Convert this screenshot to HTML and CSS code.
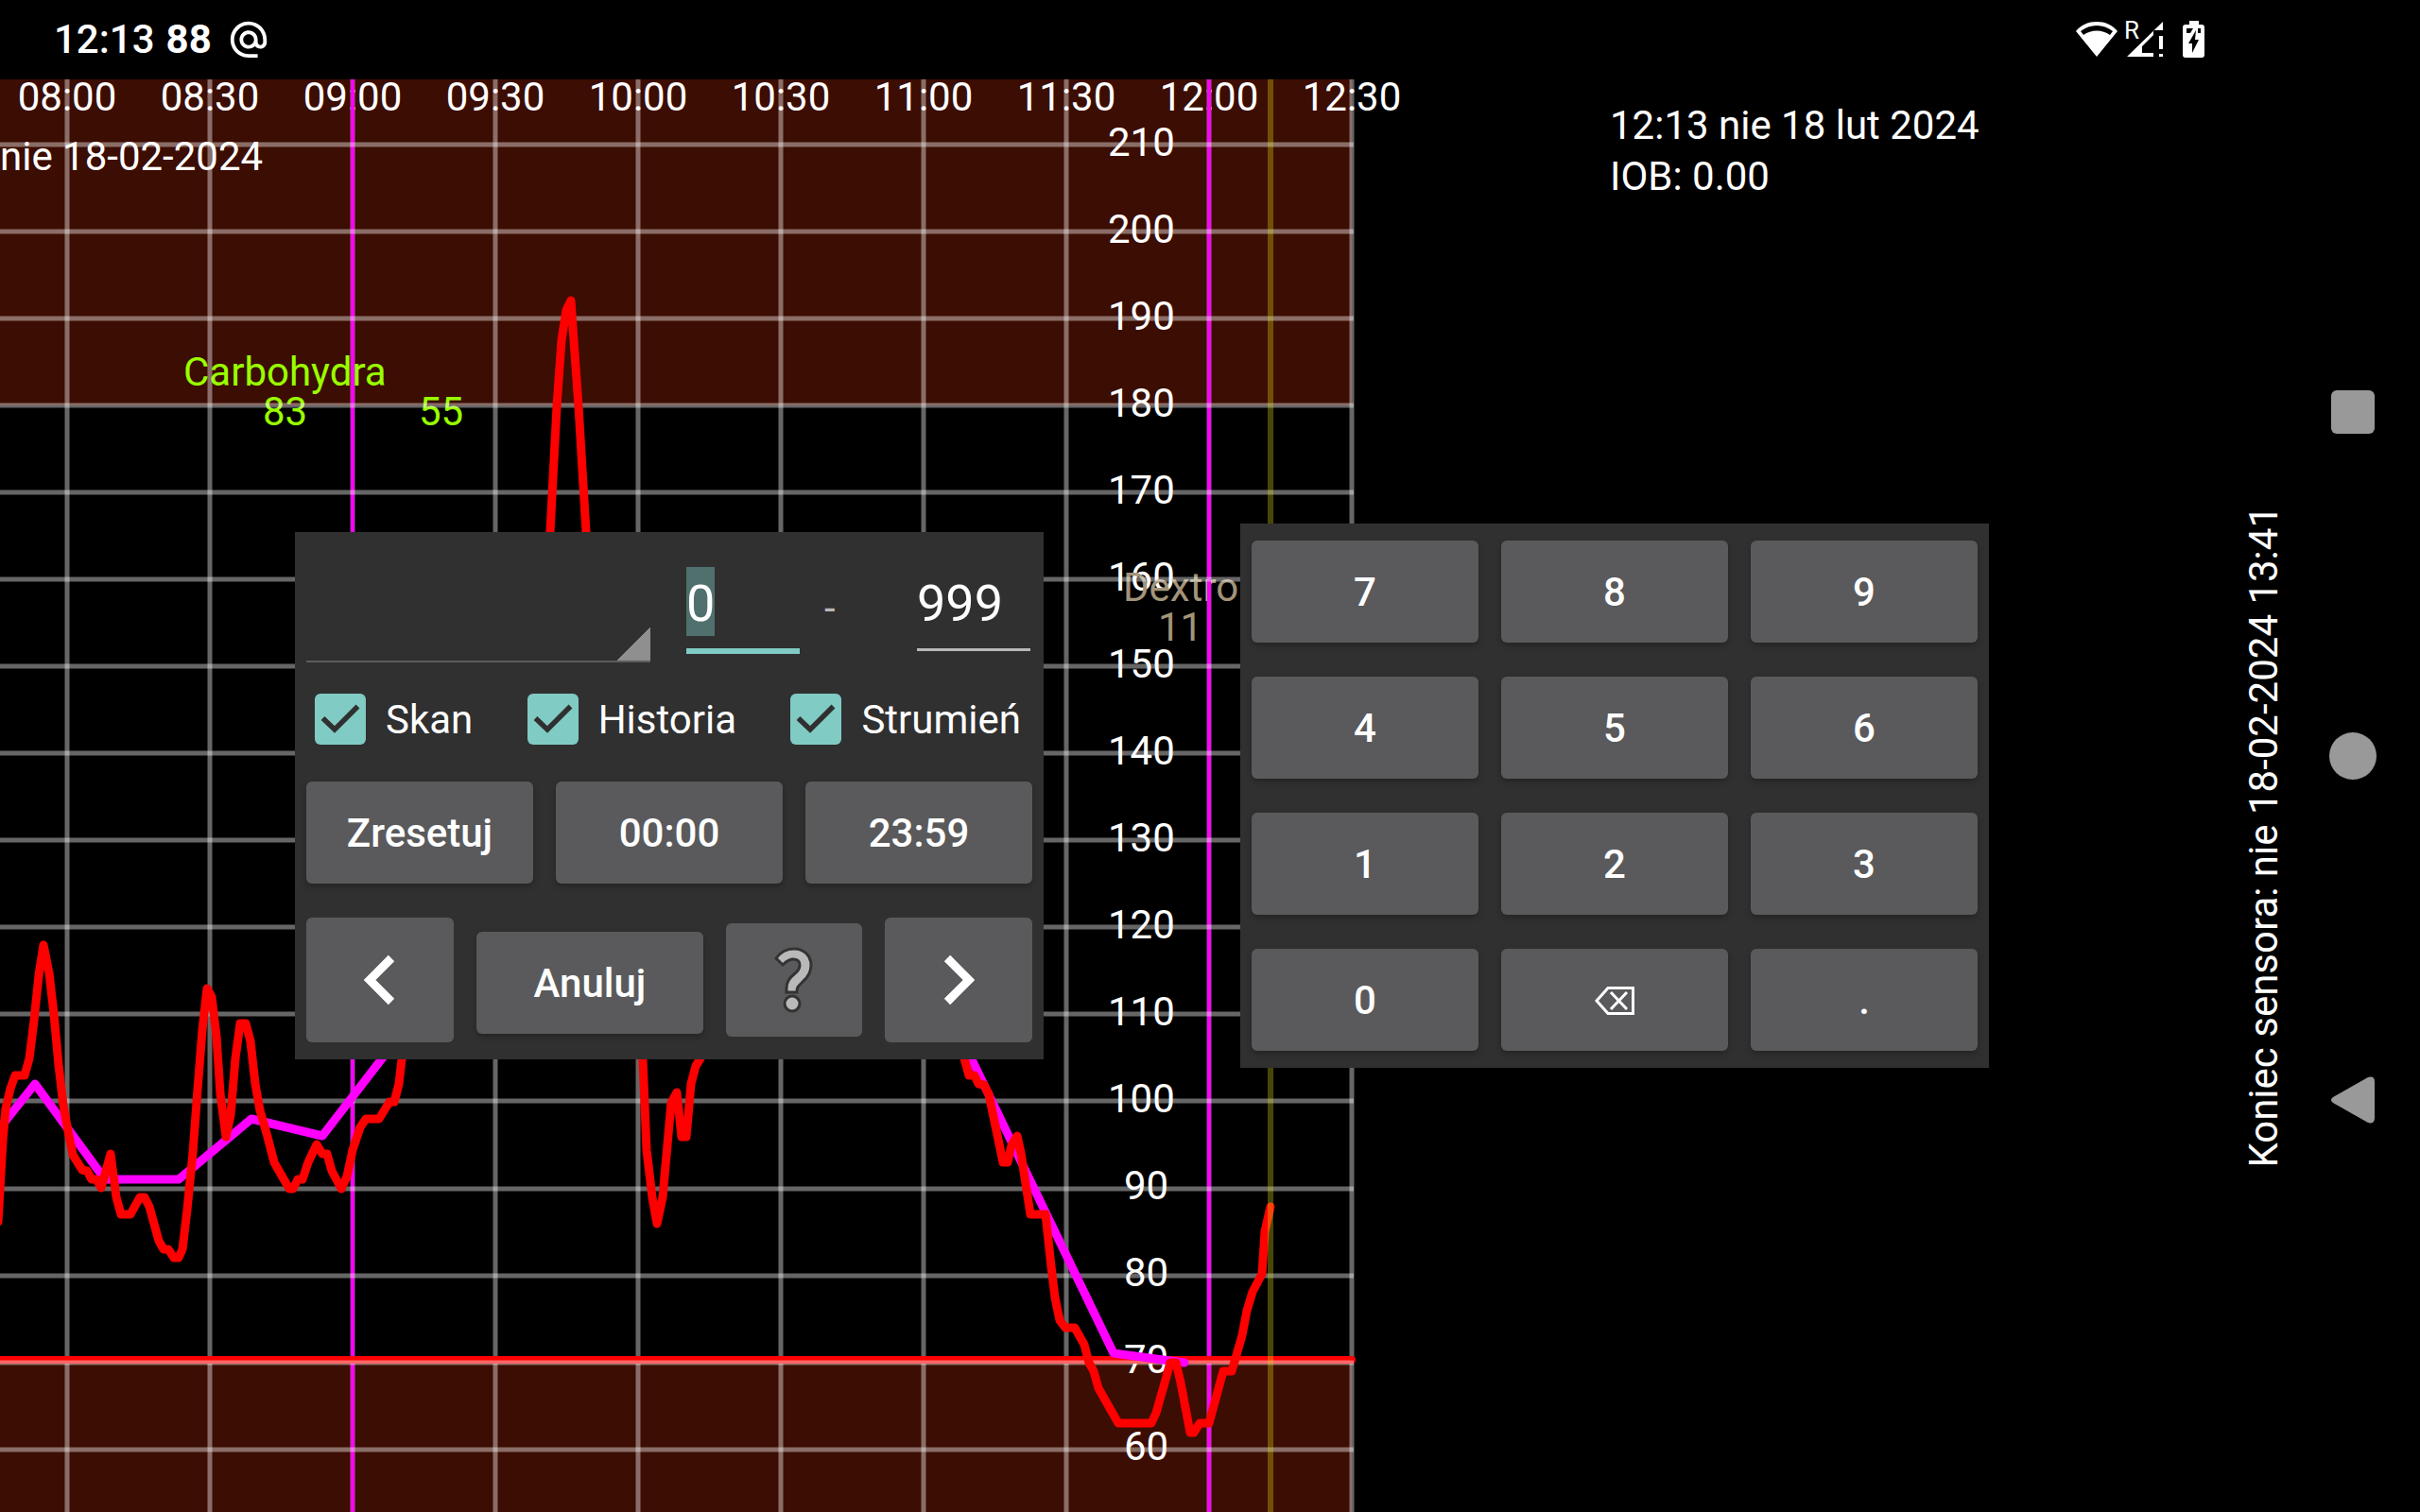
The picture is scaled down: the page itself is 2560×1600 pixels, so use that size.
FILE: index.html
```html
<!DOCTYPE html>
<html lang="pl">
<head>
<meta charset="utf-8">
<meta name="viewport" content="width=device-width, initial-scale=1">
<title>Juggluco</title>
<link rel="stylesheet" href="styles.css">
</head>
<body>
<header class="status">
  <div class="status-left">
    <span class="clock">12:13</span>
    <span class="reading">88</span>
    <svg class="at" viewBox="0 0 24 24" aria-hidden="true"><path fill="#fff" d="M12 1.95c-5.52 0-10 4.48-10 10s4.48 10 10 10h5v-2h-5c-4.34 0-8-3.66-8-8s3.66-8 8-8 8 3.66 8 8v1.43c0 .79-.71 1.57-1.500 1.570s-1.500-.78-1.500-1.570v-1.430c0-2.760-2.240-5-5-5s-5 2.240-5 5 2.240 5 5 5c1.380 0 2.640-.56 3.540-1.470.65.89 1.770 1.470 2.960 1.470 1.970 0 3.500-1.600 3.500-3.570v-1.430c0-5.520-4.480-10-10-10zm0 13c-1.660 0-3-1.340-3-3s1.340-3 3-3 3 1.340 3 3-1.340 3-3 3z"/></svg>
  </div>
  <svg class="tray" viewBox="0 0 144 48" aria-hidden="true">
    <path fill="#fff" fill-rule="evenodd" d="M26 43 4 16C10 9 17 6 26 6s16 3 22 10ZM9 16l3 4c8-6 20-6 28 0l3-4C33 8 19 8 9 16Z"/>
    <path fill="#fff" d="M96 6V15H86V20L74 32V39H86V43H58Z"/>
    <path fill="#fff" d="M92 21h4v14h-4zM92 40h4v3h-4z"/>
    <text x="55" y="24" class="roam">R</text>
    <path fill="#fff" d="M124 5h10v4h3q3 0 3 3v29q0 3-3 3h-17q-3 0-3-3V12q0-3 3-3h4Z"/>
    <path d="M121 13h7l-3 5h-4ZM133 13h3v5h-3ZM131 15l-8 14h4v10l7-14h-4Z"/>
  </svg>
</header>

<main class="stage">
  <svg class="chart" viewBox="0 84 2560 1516" preserveAspectRatio="xMinYMin slice" role="img" aria-label="Wykres glukozy">
    <rect class="zone" x="0" y="84" width="1430" height="345"/>
    <rect class="zone" x="0" y="1440" width="1430" height="160"/>

    <g class="label mid">
      <text x="71" y="117">08:00</text><text x="222" y="117">08:30</text>
      <text x="373" y="117">09:00</text><text x="524" y="117">09:30</text>
      <text x="675" y="117">10:00</text><text x="826" y="117">10:30</text>
      <text x="977" y="117">11:00</text><text x="1128" y="117">11:30</text>
      <text x="1279" y="117">12:00</text><text x="1430" y="117">12:30</text>
    </g>
    <g class="label">
      <text x="1172" y="165">210</text><text x="1172" y="257">200</text>
      <text x="1172" y="349">190</text><text x="1172" y="441">180</text>
      <text x="1172" y="533">170</text><text x="1172" y="625">160</text>
      <text x="1172" y="717">150</text><text x="1172" y="809">140</text>
      <text x="1172" y="901">130</text><text x="1172" y="993">120</text>
      <text x="1172" y="1085">110</text><text x="1172" y="1177">100</text>
      <text x="1189" y="1269">90</text><text x="1189" y="1361">80</text>
      <text x="1189" y="1453">70</text><text x="1189" y="1545">60</text>
      <text x="0" y="180">nie 18-02-2024</text>
    </g>
    <g class="label carbs">
      <text x="194" y="408">Carbohydra</text>
      <text x="278" y="450">83</text><text x="443" y="450">55</text>
    </g>
    <g class="label dextro">
      <text x="1188" y="636">Dextro</text><text x="1225" y="678">11</text>
    </g>

    <path class="grid" d="M71 84V1600M222 84V1600M373 84V1600M524 84V1600M675 84V1600M826 84V1600M977 84V1600M1128 84V1600M1279 84V1600M1430 84V1600"/>
    <path class="hours" d="M373 84V1600M1279 84V1600"/>
    <path class="low" d="M0 1439H1430"/>
    <path class="grid" d="M0 153H1432M0 245H1432M0 337H1432M0 429H1432M0 521H1432M0 613H1432M0 705H1432M0 797H1432M0 889H1432M0 981H1432M0 1073H1432M0 1165H1432M0 1258H1432M0 1350H1432M0 1442H1432M0 1534H1432"/>

    <polyline class="history" points="-2,1196 37,1147 111,1248 189,1248 266,1184 341,1202 405,1119 600,900 950,950 1026,1117 1178,1432 1253,1442"/>
    <polyline class="stream" points="-2,1293 3,1207 6,1173 11,1152 16,1138 26,1138 31,1120 36,1080 41,1032 46,1000 52,1030 57,1073 62,1127 67,1170 72,1197 77,1222 87,1238 92,1239 97,1248 102,1248 107,1257 117,1221 123,1267 128,1285 138,1285 148,1267 153,1267 158,1277 168,1313 173,1322 178,1322 184,1331 189,1331 193,1322 198,1280 204,1220 209,1153 214,1090 219,1046 224,1055 229,1097 233,1157 239,1203 244,1180 249,1120 254,1083 260,1083 265,1102 270,1147 275,1175 283,1203 290,1230 306,1258 310,1258 315,1248 320,1248 326,1230 335,1211 341,1221 346,1221 351,1239 361,1258 367,1245 373,1217 381,1193 387,1184 401,1184 412,1166 417,1166 422,1147 425,1121 440,900 582,563 589,430 594,360 599,328 604,318 612,430 620,563 640,800 680,1121 684,1217 690,1267 695,1295 701,1267 710,1167 716,1156 721,1203 726,1203 731,1147 736,1128 741,1120 760,900 1000,1000 1020,1120 1025,1138 1031,1138 1035,1147 1041,1148 1046,1158 1050,1177 1061,1230 1066,1230 1070,1212 1076,1202 1080,1220 1090,1285 1106,1285 1112,1340 1116,1373 1121,1397 1127,1405 1137,1405 1147,1423 1152,1442 1157,1451 1162,1469 1183,1506 1218,1506 1223,1495 1231,1467 1238,1442 1244,1442 1249,1463 1259,1516 1263,1516 1269,1506 1279,1506 1294,1451 1303,1451 1314,1413 1319,1387 1325,1367 1335,1348 1338,1303 1344,1277"/>
    <path class="now" d="M1344 84V1600"/>
  </svg>

  <aside class="info">
    <p>12:13 nie 18 lut 2024</p>
    <p>IOB: 0.00</p>
  </aside>

  <form class="panel search">
    <div class="row range">
      <select class="kind" aria-label="Rodzaj"><option></option></select>
      <input class="num focused" type="text" value="0" aria-label="Od">
      <span class="dash">-</span>
      <input class="num" type="text" value="999" aria-label="Do">
    </div>
    <div class="row checks">
      <label><input type="checkbox" checked><span>Skan</span></label>
      <label><input type="checkbox" checked><span>Historia</span></label>
      <label><input type="checkbox" checked><span>Strumień</span></label>
    </div>
    <div class="row times">
      <button type="button">Zresetuj</button>
      <button type="button">00:00</button>
      <button type="button">23:59</button>
    </div>
    <div class="row nav">
      <button type="button" class="arrow" aria-label="Wstecz"><svg viewBox="0 0 34 54"><path d="M29 4 6 27l23 23"/></svg></button>
      <button type="button" class="cancel">Anuluj</button>
      <button type="button" class="help" aria-label="Pomoc"><svg viewBox="0 0 46 72"><path class="q" d="M4 13C9 6 16 3 23 3c10 0 18 7 18 17 0 8-3 13-9 18-5 5-6 6-6 10v1H15v-4c0-7 3-11 9-16 4-3 5-6 5-9 0-4-3-6-7-6s-8 3-11 6Z"/><ellipse class="q" cx="21" cy="61" rx="8" ry="8"/></svg></button>
      <button type="button" class="arrow" aria-label="Dalej"><svg viewBox="0 0 34 54"><path d="m5 4 23 23L5 50"/></svg></button>
    </div>
  </form>

  <section class="panel keypad" aria-label="Klawiatura">
    <button type="button">7</button><button type="button">8</button><button type="button">9</button>
    <button type="button">4</button><button type="button">5</button><button type="button">6</button>
    <button type="button">1</button><button type="button">2</button><button type="button">3</button>
    <button type="button">0</button>
    <button type="button" aria-label="Usuń"><svg class="erase" viewBox="0 0 42 30"><path d="M14 1.500H40.500V28.500H14L2 15ZM17 6l17 18M34 6 17 24"/></svg></button>
    <button type="button">.</button>
  </section>

  <p class="sensor">Koniec sensora: nie 18-02-2024 13:41</p>

  <nav class="system">
    <button type="button" aria-label="Ostatnie"><svg viewBox="0 0 50 50"><rect x="2" y="2" width="46" height="46" rx="6"/></svg></button>
    <button type="button" aria-label="Ekran główny"><svg viewBox="0 0 50 50"><circle cx="25" cy="25" r="25"/></svg></button>
    <button type="button" aria-label="Cofnij"><svg viewBox="0 0 50 50"><path d="M4 22 41 1q7-2 7 5v38q0 7-7 5L4 28q-4-3 0-6Z"/></svg></button>
  </nav>
</main>
</body>
</html>
```
FILE: styles.css
```css
* { box-sizing: border-box; }

html, body { height: 100%; }

body {
  margin: 0;
  display: flex;
  flex-direction: column;
  background: #000;
  color: #fff;
  font: 42px/54px Roboto, "Noto Sans", sans-serif;
  overflow: hidden;
}

p { margin: 0; }

button, input, select { font: inherit; color: inherit; }

/* status bar */
.status {
  flex: none;
  display: flex;
  justify-content: space-between;
  align-items: center;
  height: 84px;
  padding: 0 224px 0 57px;
}
.status-left { display: flex; align-items: center; }
.clock { font-weight: 500; }
.reading {
  width: 64px;
  margin-left: 12px;
  font-weight: bold;
}
.at { width: 46px; height: 46px; }
.tray { width: 144px; height: 48px; margin-bottom: 2px; }
.roam { font: 26px Roboto, sans-serif; fill: #fff; }

/* stage */
.stage {
  position: relative;
  flex: 1;
  min-height: 0;
  display: grid;
  grid-template-columns: 312px 792px 208px 792px 1fr 144px 96px;
  align-items: center;
}
.chart { position: absolute; inset: 0; width: 100%; height: 100%; }
.zone { fill: #3c0d02; }
.label { font-size: 42px; fill: #fff; }
.mid { text-anchor: middle; }
.carbs { fill: #9f0; }
.dextro { fill: #a39479; }
.grid { fill: none; stroke: rgba(255, 255, 255, .4); stroke-width: 5; }
.hours { stroke: #f0f; stroke-width: 4; }
.low { stroke: #f00; stroke-width: 8; stroke-linecap: round; }
.history, .stream {
  fill: none;
  stroke-width: 9;
  stroke-linejoin: round;
  stroke-linecap: round;
}
.history { stroke: #f0f; }
.stream { stroke: #f00; }
.now { stroke: rgba(224, 224, 20, .32); stroke-width: 6; }

.info { position: absolute; left: 1703px; top: 22px; }

/* panels */
.panel { position: relative; background: #303030; }
.panel button {
  display: flex;
  align-items: center;
  justify-content: center;
  height: 108px;
  padding: 2px 0 0;
  border: 0;
  border-radius: 6px;
  background: #5a5a5c;
  font-weight: 500;
  box-shadow: 0 3px 6px rgba(0, 0, 0, .25);
}
.search { grid-column: 2; padding: 0 12px 18px; }
.row { display: flex; }

.range { height: 138px; padding-right: 2px; align-items: flex-end; }
.kind {
  width: 364px;
  height: 102px;
  margin-right: 38px;
  border: 0;
  border-bottom: 2px solid #5c5c5c;
  border-radius: 0;
  appearance: none;
  background: linear-gradient(to bottom right, transparent 50%, #8f8f8f 50%) right bottom / 36px 36px no-repeat;
}
.num {
  width: 120px;
  height: 89px;
  margin-bottom: 12px;
  padding: 2px 0 11px;
  border: 0;
  border-bottom: 3px solid #b8b8b8;
  background: none;
  font-size: 54px;
}
.num.focused {
  height: 92px;
  margin-bottom: 9px;
  border-bottom: 6px solid #80cbc4;
  background: linear-gradient(#50706e, #50706e) left top / 30px 73px no-repeat;
}
.dash { flex: 1; padding-left: 26px; margin-bottom: 30px; color: #b8b8b8; }

.checks { height: 126px; padding: 0 12px 6px 9px; align-items: center; justify-content: space-between; }
.checks label { display: flex; align-items: center; gap: 21px; }
.checks span { padding-top: 2px; }
.checks input {
  appearance: none;
  width: 54px;
  height: 54px;
  margin: 0;
  border-radius: 6px;
  background: #80cbc4 url("data:image/svg+xml,%3Csvg xmlns='http://www.w3.org/2000/svg' viewBox='0 0 54 54'%3E%3Cpath d='M8.500 26 21 38 45.500 13.500' fill='none' stroke='%23303030' stroke-width='5.500'/%3E%3C/svg%3E") center / 54px 54px;
}

.times { gap: 24px; }
.times button { flex: 1; }
.nav { height: 132px; margin-top: 36px; gap: 24px; align-items: center; }
.panel .arrow { width: 156px; height: 132px; padding: 0; box-shadow: none; }
.panel .cancel { width: 240px; margin-top: 6px; }
.panel .help { width: 144px; height: 120px; padding: 0; box-shadow: none; }
.arrow svg { width: 34px; height: 54px; }
.arrow path { fill: none; stroke: #fff; stroke-width: 9; }
.help svg { width: 46px; height: 72px; }
.q { fill: #b9b9b9; stroke: #333; stroke-width: 3; }

.keypad {
  grid-column: 4;
  display: grid;
  grid-template-columns: repeat(3, 1fr);
  gap: 36px 24px;
  padding: 18px 12px;
}
.erase { width: 42px; height: 30px; }
.erase path { fill: none; stroke: #fff; stroke-width: 3; }

.sensor {
  grid-column: 6;
  position: relative;
  justify-self: end;
  writing-mode: vertical-rl;
  rotate: 180deg;
  white-space: nowrap;
  margin-right: 42px;
  margin-top: 86px;
}

.system {
  grid-column: 7;
  position: relative;
  align-self: stretch;
  display: flex;
  flex-direction: column;
  justify-content: center;
  gap: 314px;
  padding-bottom: 85px;
}
.system button { width: 50px; height: 50px; padding: 0; border: 0; background: none; }
.system svg { display: block; width: 50px; height: 50px; fill: #999; }
```
